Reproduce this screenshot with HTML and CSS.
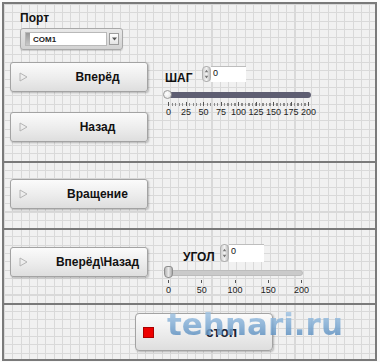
FILE: index.html
```html
<!DOCTYPE html>
<html>
<head lang="ru">
    <meta charset="UTF-8">
    <title>Панель</title>
    <link rel="stylesheet" href="styles.css">
</head>
<body>
    <div class="frame">
        <div class="sec sec-main">
            <div class="left">
                <div class="lbl">Порт</div>
                <div class="combo">
                    <div class="combo-field"><span class="combo-bar"></span>COM1</div>
                    <div class="combo-btn">
                        <svg width="5" height="4" viewBox="0 0 5 4"><path d="M0 0.5H5L2.5 3.5Z" fill="#555"/></svg>
                    </div>
                </div>
                <div class="btn btn-fwd">
                    <svg class="tri" width="9" height="10" viewBox="0 0 9 10"><path d="M1 1L8 5L1 9Z" fill="none" stroke="#b4b4b4" stroke-width="1"/></svg>
                    <span>Вперёд</span>
                </div>
                <div class="btn btn-back">
                    <svg class="tri" width="9" height="10" viewBox="0 0 9 10"><path d="M1 1L8 5L1 9Z" fill="none" stroke="#b4b4b4" stroke-width="1"/></svg>
                    <span>Назад</span>
                </div>
            </div>
            <div class="right right-step">
                <div class="num">
                    <span class="num-lbl">ШАГ</span>
                    <div class="spin">
                        <svg width="8" height="16" viewBox="0 0 8 16"><path d="M2 6L4 3L6 6Z M2 10L4 13L6 10Z" fill="#777"/></svg>
                    </div>
                    <div class="num-field">0</div>
                </div>
                <div class="slider slider-step">
                    <div class="track"><div class="thumb"></div></div>
                    <div class="ticks"></div>
                    <div class="scale">
                        <span>0</span><span>25</span><span>50</span><span>75</span><span>100</span><span>125</span><span>150</span><span>175</span><span>200</span>
                    </div>
                </div>
            </div>
        </div>

        <div class="sec sec-rot">
            <div class="left">
                <div class="btn">
                    <svg class="tri" width="9" height="10" viewBox="0 0 9 10"><path d="M1 1L8 5L1 9Z" fill="none" stroke="#b4b4b4" stroke-width="1"/></svg>
                    <span>Вращение</span>
                </div>
            </div>
        </div>

        <div class="sec sec-angle">
            <div class="left">
                <div class="btn">
                    <svg class="tri" width="9" height="10" viewBox="0 0 9 10"><path d="M1 1L8 5L1 9Z" fill="none" stroke="#b4b4b4" stroke-width="1"/></svg>
                    <span>Вперёд\Назад</span>
                </div>
            </div>
            <div class="right right-angle">
                <div class="num num-angle">
                    <span class="num-lbl">УГОЛ</span>
                    <div class="spin">
                        <svg width="8" height="16" viewBox="0 0 8 16"><path d="M2 6L4 3L6 6Z M2 10L4 13L6 10Z" fill="#777"/></svg>
                    </div>
                    <div class="num-field">0</div>
                </div>
                <div class="slider slider-angle">
                    <div class="track"><div class="thumb"></div></div>
                    <div class="ticks"></div>
                    <div class="scale">
                        <span>0</span><span>50</span><span>100</span><span>150</span><span>200</span>
                    </div>
                </div>
            </div>
        </div>

        <div class="sec sec-stop">
            <div class="btn btn-stop">
                <span class="stop-mark"></span>
                <span>стоп</span>
            </div>
            <div class="watermark">tehnari.ru</div>
        </div>
    </div>
</body>
</html>
```

FILE: styles.css
```css
*{
    margin: 0px;
    padding: 0px;
    box-sizing: border-box;
}
body{
    background-color: #fafafa;
    font-family: "Liberation Sans", Arial, sans-serif;
    color: #111;
}
.frame{
    margin: 2px 0 0 2px;
    width: 375px;
    border: 2px solid #7a7a7a;
    background-color: #f1f1f1;
    background-image:
        repeating-linear-gradient(to right, #d9d9d9 0px, #d9d9d9 1px, transparent 1px, transparent 8.3px),
        repeating-linear-gradient(to bottom, #d9d9d9 0px, #d9d9d9 1px, transparent 1px, transparent 8.3px);
}
.sec{
    display: flex;
    position: relative;
}
.sec + .sec{
    border-top: 2px solid #7a7a7a;
}
.sec-main{
    height: 157px;
    padding: 7px 0 0 6px;
}
.sec-rot{
    height: 67px;
    padding: 16px 0 0 6px;
}
.sec-angle{
    height: 75px;
    padding: 17px 0 0 6px;
}
.sec-stop{
    height: 56px;
    padding: 8px 0 0 131px;
}

/* левая колонка */
.left{
    width: 138px;
    display: flex;
    flex-direction: column;
}
.lbl{
    font-size: 12px;
    font-weight: bold;
    line-height: 14px;
    margin-left: 10px;
}
.combo{
    margin: 3px 0 0 10px;
    width: 103px;
    height: 22px;
    border: 1px solid #a9a9a9;
    border-radius: 3px;
    background: linear-gradient(#e9e9e9, #d2d2d2);
    display: flex;
    align-items: center;
    padding-left: 4px;
    box-shadow: 0 1px 1px rgba(0,0,0,0.15);
}
.combo-field{
    width: 82px;
    height: 14px;
    background-color: #fff;
    border: 1px solid #b9b9b9;
    display: flex;
    align-items: center;
    font-size: 8px;
    font-weight: bold;
    color: #222;
}
.combo-bar{
    width: 4px;
    height: 12px;
    background: linear-gradient(#9a9a9a, #c8c8c8);
    margin-right: 3px;
}
.combo-btn{
    width: 10px;
    height: 12px;
    margin-left: 2px;
    background: linear-gradient(#fff, #e4e4e4);
    border: 1px solid #9d9d9d;
    display: flex;
    align-items: center;
    justify-content: center;
}

/* кнопки */
.btn{
    width: 138px;
    height: 30px;
    display: flex;
    align-items: center;
    border: 1px solid #a3a3a3;
    border-radius: 3px;
    background: linear-gradient(#fbfbfb, #ececec 55%, #dedede);
    box-shadow: 1px 1px 2px rgba(0,0,0,0.25);
    font-size: 12px;
    font-weight: bold;
    color: #111;
}
.btn .tri{
    margin-left: 8px;
}
.btn span{
    flex: 1;
    text-align: center;
    padding-left: 20px;
}
.btn-fwd{
    margin-top: 12px;
}
.btn-back{
    margin-top: 20px;
}
.btn-stop{
    height: 38px;
    border-radius: 4px;
}
.stop-mark{
    flex: none !important;
    padding: 0 !important;
    width: 11px;
    height: 11px;
    margin-left: 7px;
    background-color: #ee0000;
    border: 1px solid #a00;
}
.btn-stop span + span{
    padding-left: 17px;
    font-size: 14px;
    color: #1c2436;
}

/* правая колонка */
.right{
    margin-left: 17px;
    width: 150px;
}
.right-step{
    padding-top: 55px;
}
.right-angle{
    margin-top: -3px;
}
.num{
    display: flex;
    align-items: flex-end;
    height: 16px;
}
.num-angle{
    margin-left: 18px;
    height: 18px;
}
.num-lbl{
    font-size: 12px;
    font-weight: bold;
    line-height: 12px;
    width: 37px;
    margin-bottom: -2px;
}
.num-angle .num-lbl{
    width: 37px;
    margin-bottom: -1px;
}
.spin{
    width: 9px;
    height: 100%;
    border-radius: 4px;
    background: linear-gradient(to right, #d0d0d0, #f2f2f2, #bdbdbd);
    border: 1px solid #b0b0b0;
    display: flex;
    align-items: center;
    justify-content: center;
}
.num-field{
    width: 35px;
    height: 100%;
    background-color: #fff;
    border-top: 1px solid #bdbdbd;
    font-size: 9px;
    line-height: 12px;
    padding-left: 2px;
}

/* слайдеры */
.slider{
    position: relative;
}
.slider-step{
    margin-top: 10px;
}
.slider-angle{
    margin-top: 8px;
}
.track{
    position: relative;
    height: 6px;
    border-radius: 3px;
}
.slider-step .track{
    margin-left: 1px;
    width: 145px;
    background-color: #5e5e72;
}
.slider-angle .track{
    width: 138px;
    background-color: #cacaca;
    border: 1px solid #bcbcbc;
}
.thumb{
    position: absolute;
}
.slider-step .thumb{
    left: -3px;
    top: -2px;
    width: 9px;
    height: 9px;
    border-radius: 50%;
    background: radial-gradient(circle at 40% 40%, #ffffff, #dcdcdc);
    border: 1px solid #9a9a9a;
}
.slider-angle .thumb{
    left: -2px;
    top: -5px;
    width: 9px;
    height: 12px;
    border-radius: 3px 3px 4px 4px;
    background: linear-gradient(to right, #b5b5b5, #e8e8e8, #a9a9a9);
    border: 1px solid #8e8e8e;
}
.ticks{
    height: 4px;
}
.slider-step .ticks{
    margin: 4px 0 0 3px;
    width: 141px;
    background-image:
        repeating-linear-gradient(to right, #555 0px, #555 1px, transparent 1px, transparent 17.5px),
        repeating-linear-gradient(to right, #8a8a8a 0px, #8a8a8a 1px, transparent 1px, transparent 3.5px);
    background-size: 100% 4px, 100% 3px;
    background-repeat: no-repeat;
    background-position: 0 0, 0 1px;
}
.slider-angle .ticks{
    margin: 4px 0 0 3px;
    width: 134px;
    height: 3px;
    background-image: repeating-linear-gradient(to right, #555 0px, #555 1px, transparent 1px, transparent 33.25px);
}
.scale{
    display: flex;
    justify-content: space-between;
    margin-left: 3px;
    font-size: 9px;
    line-height: 10px;
    color: #222;
}
.slider-step .scale{
    width: 141px;
    margin-top: 1px;
}
.slider-angle .scale{
    width: 134px;
    margin-top: 2px;
}
.scale span{
    width: 1px;
    display: flex;
    justify-content: center;
    white-space: nowrap;
}

/* водяной знак поверх кнопки */
.watermark{
    position: absolute;
    left: 163px;
    top: 1px;
    font-family: "DejaVu Sans", sans-serif;
    font-weight: bold;
    font-size: 31px;
    background: linear-gradient(#b4d2ec, #7eaad3 55%, #4f84b8);
    -webkit-background-clip: text;
    background-clip: text;
    color: transparent;
    opacity: 0.85;
}
```
